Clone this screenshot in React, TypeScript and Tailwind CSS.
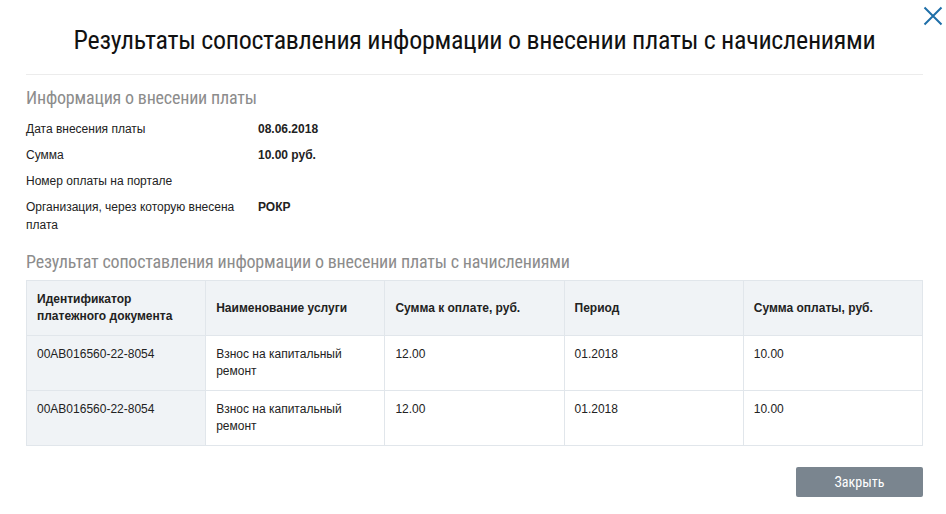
const info = [
  { label: 'Дата внесения платы', value: '08.06.2018' },
  { label: 'Сумма', value: '10.00 руб.' },
  { label: 'Номер оплаты на портале', value: '' },
  { label: 'Организация, через которую внесена плата', value: 'РОКР' },
]

const headers = [
  'Идентификатор платежного документа',
  'Наименование услуги',
  'Сумма к оплате, руб.',
  'Период',
  'Сумма оплаты, руб.',
]

const rows = [
  ['00AB016560-22-8054', 'Взнос на капитальный ремонт', '12.00', '01.2018', '10.00'],
  ['00AB016560-22-8054', 'Взнос на капитальный ремонт', '12.00', '01.2018', '10.00'],
]

const narrow = "font-['Roboto_Condensed',Roboto,sans-serif]"

export default function App() {
  return (
    <div className="w-[946px] h-[514px] bg-white relative font-['Liberation_Sans',Arial,sans-serif] text-[12px] text-[#222]">
      <button className="absolute left-[923px] top-[6px] text-[#1f6fa8]">
        <svg width="20" height="20" viewBox="0 0 20 20" fill="none" stroke="currentColor" strokeWidth="2">
          <path d="M1.5 1.5L18.5 18.5M18.5 1.5L1.5 18.5" />
        </svg>
      </button>

      <div className="pl-[26px] pr-[23px] pt-[24px]">
        {/* заголовок */}
        <h1 className={`${narrow} text-[26px] leading-[32px] tracking-[-0.3px] text-center text-[#111] pb-[18px] border-b border-[#ececec]`}>
          Результаты сопоставления информации о внесении платы с начислениями
        </h1>

        <h2 className={`${narrow} text-[18px] leading-[24px] tracking-[-0.2px] text-[#8c8c8c] mt-[11px]`}>
          Информация о внесении платы
        </h2>

        <div className="mt-[6px] flex flex-col">
          {info.map((r) => (
            <div key={r.label} className="flex py-[4px] leading-[18px]">
              <div className="w-[232px] pr-[16px]">{r.label}</div>
              <div className="font-bold">{r.value}</div>
            </div>
          ))}
        </div>

        <h2 className={`${narrow} text-[18px] leading-[24px] tracking-[-0.2px] text-[#8c8c8c] mt-[12px]`}>
          Результат сопоставления информации о внесении платы с начислениями
        </h2>

        <table className="mt-[6px] w-[897px] border-collapse table-fixed">
          <thead>
            <tr className="bg-[#f0f3f6]">
              {headers.map((h) => (
                <th key={h} className="border border-[#e1e6eb] h-[55px] px-[10px] text-left font-bold leading-[17px] align-middle">
                  {h}
                </th>
              ))}
            </tr>
          </thead>
          <tbody>
            {rows.map((r, i) => (
              <tr key={i}>
                {r.map((c, j) => (
                  <td
                    key={j}
                    className={`border border-[#e1e6eb] h-[55px] px-[10px] pt-[10px] align-top leading-[17px] ${j === 0 ? 'bg-[#f0f3f6]' : 'bg-white'}`}
                  >
                    {c}
                  </td>
                ))}
              </tr>
            ))}
          </tbody>
        </table>

        <div className="flex justify-end mt-[21px]">
          <button className={`${narrow} w-[127px] h-[30px] rounded-[2px] bg-[#7a858f] text-white text-[14px]`}>
            Закрыть
          </button>
        </div>
      </div>
    </div>
  )
}
